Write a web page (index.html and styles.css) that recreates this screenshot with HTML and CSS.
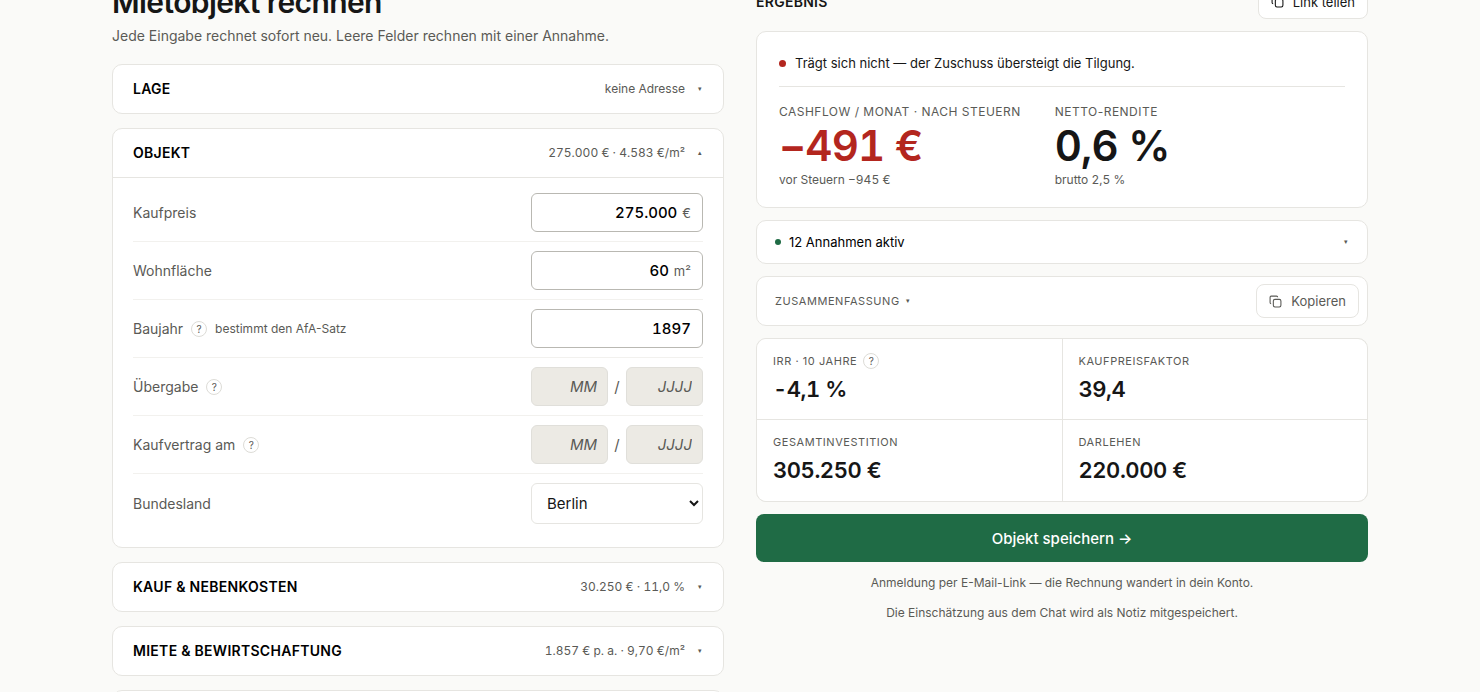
FILE: index.html
```html
<!DOCTYPE html>
<html lang="de">
<head>
  <meta charset="UTF-8">
  <meta name="viewport" content="width=device-width, initial-scale=1">
  <title>Mietobjekt rechnen</title>
  <link rel="stylesheet" href="styles.css">
</head>
<body>
  <main class="page">
    <section class="column inputs">
      <header class="intro">
        <h1>Mietobjekt rechnen</h1>
        <p>Jede Eingabe rechnet sofort neu. Leere Felder rechnen mit einer Annahme.</p>
      </header>

      <div class="card">
        <button type="button" class="card-head" aria-expanded="false">
          <span class="card-title">Lage</span>
          <span class="card-summary">keine Adresse</span>
          <span class="caret">▾</span>
        </button>
      </div>

      <div class="card">
        <button type="button" class="card-head open" aria-expanded="true">
          <span class="card-title">Objekt</span>
          <span class="card-summary">275.000 € · 4.583 €/m²</span>
          <span class="caret">▴</span>
        </button>
        <form class="fields">
          <div class="row">
            <label for="preis">Kaufpreis</label>
            <div class="control">
              <input type="text" id="preis" value="275.000">
              <span class="unit">€</span>
            </div>
          </div>
          <div class="row">
            <label for="flaeche">Wohnfläche</label>
            <div class="control">
              <input type="text" id="flaeche" value="60">
              <span class="unit">m²</span>
            </div>
          </div>
          <div class="row">
            <label for="baujahr">Baujahr</label>
            <button type="button" class="help">?</button>
            <span class="hint">bestimmt den AfA-Satz</span>
            <div class="control">
              <input type="text" id="baujahr" value="1897">
            </div>
          </div>
          <div class="row">
            <label for="uebergabe">Übergabe</label>
            <button type="button" class="help">?</button>
            <div class="date">
              <input type="text" id="uebergabe" placeholder="MM">
              <span>/</span>
              <input type="text" placeholder="JJJJ" aria-label="Übergabe Jahr">
            </div>
          </div>
          <div class="row">
            <label for="vertrag">Kaufvertrag am</label>
            <button type="button" class="help">?</button>
            <div class="date">
              <input type="text" id="vertrag" placeholder="MM">
              <span>/</span>
              <input type="text" placeholder="JJJJ" aria-label="Kaufvertrag Jahr">
            </div>
          </div>
          <div class="row">
            <label for="land">Bundesland</label>
            <select id="land">
              <option>Berlin</option>
            </select>
          </div>
        </form>
      </div>

      <div class="card">
        <button type="button" class="card-head" aria-expanded="false">
          <span class="card-title">Kauf &amp; Nebenkosten</span>
          <span class="card-summary">30.250 € · 11,0 %</span>
          <span class="caret">▾</span>
        </button>
      </div>

      <div class="card">
        <button type="button" class="card-head" aria-expanded="false">
          <span class="card-title">Miete &amp; Bewirtschaftung</span>
          <span class="card-summary">1.857 € p. a. · 9,70 €/m²</span>
          <span class="caret">▾</span>
        </button>
      </div>

      <div class="card">
        <button type="button" class="card-head" aria-expanded="false"></button>
      </div>
    </section>

    <section class="column results">
      <header class="result-head">
        <h2>Ergebnis</h2>
        <button type="button" class="small-button share">
          <svg class="copy-icon" viewBox="0 0 24 24"><rect x="8" y="8" width="14" height="14" rx="3"/><path d="M4 16a2 2 0 0 1-2-2V4a2 2 0 0 1 2-2h10a2 2 0 0 1 2 2"/></svg>
          Link teilen
        </button>
      </header>

      <div class="card verdict">
        <p class="verdict-text"><span class="dot red"></span>Trägt sich nicht — der Zuschuss übersteigt die Tilgung.</p>
        <div class="figures">
          <div class="figure">
            <span class="figure-label">Cashflow / Monat · nach Steuern</span>
            <strong class="negative">−491 €</strong>
            <span class="figure-sub">vor Steuern −945 €</span>
          </div>
          <div class="figure">
            <span class="figure-label">Netto-Rendite</span>
            <strong>0,6 %</strong>
            <span class="figure-sub">brutto 2,5 %</span>
          </div>
        </div>
      </div>

      <div class="card">
        <button type="button" class="assumptions" aria-expanded="false">
          <span class="dot green"></span>
          <span>12 Annahmen aktiv</span>
          <span class="caret">▾</span>
        </button>
      </div>

      <div class="card summary">
        <button type="button" class="summary-toggle" aria-expanded="false">
          <span>Zusammenfassung</span>
          <span class="caret">▾</span>
        </button>
        <button type="button" class="small-button">
          <svg class="copy-icon" viewBox="0 0 24 24"><rect x="8" y="8" width="14" height="14" rx="3"/><path d="M4 16a2 2 0 0 1-2-2V4a2 2 0 0 1 2-2h10a2 2 0 0 1 2 2"/></svg>
          Kopieren
        </button>
      </div>

      <div class="card metrics">
        <div class="metric">
          <div class="metric-label">IRR · 10 Jahre <button type="button" class="help">?</button></div>
          <strong>-4,1 %</strong>
        </div>
        <div class="metric">
          <div class="metric-label">Kaufpreisfaktor</div>
          <strong>39,4</strong>
        </div>
        <div class="metric">
          <div class="metric-label">Gesamtinvestition</div>
          <strong>305.250 €</strong>
        </div>
        <div class="metric">
          <div class="metric-label">Darlehen</div>
          <strong>220.000 €</strong>
        </div>
      </div>

      <button type="button" class="save">Objekt speichern →</button>
      <p class="note">Anmeldung per E-Mail-Link — die Rechnung wandert in dein Konto.</p>
      <p class="note">Die Einschätzung aus dem Chat wird als Notiz mitgespeichert.</p>
    </section>
  </main>
</body>
</html>
```
FILE: styles.css
```css
* {
  box-sizing: border-box;
}
html {
  height: 100%;
}
body {
  height: 100%;
  margin: 0;
  overflow: hidden;
  background-color: #fafaf8;
  color: #161616;
  font-family: Inter, "Liberation Sans", sans-serif;
  font-size: 14px;
}
h1, h2, p {
  margin: 0;
}
button, input, select {
  font: inherit;
  color: inherit;
}
button {
  margin: 0;
  padding: 0;
  border: none;
  background: none;
  cursor: pointer;
}

/* page scrolled a little past its top */
.page {
  display: grid;
  grid-template-columns: 1fr 1fr;
  align-items: start;
  gap: 32px;
  max-width: 1256px;
  margin: -16px auto 0;
}
.column {
  display: flex;
  flex-direction: column;
}
.inputs {
  gap: 14px;
}
.results {
  gap: 12px;
}

/* headings */
.intro {
  height: 66px;
}
.intro h1 {
  font-size: 30px;
  line-height: 36px;
  font-weight: 600;
  letter-spacing: -0.02em;
}
.intro p {
  margin-top: 4px;
  line-height: 24px;
  color: #5a5a56;
}
.result-head {
  display: flex;
  justify-content: space-between;
  align-items: center;
  height: 35px;
}
.result-head h2 {
  font-size: 14px;
  line-height: 20px;
  font-weight: 600;
  letter-spacing: 0.02em;
  text-transform: uppercase;
}

/* cards */
.card {
  border: 1px solid #e6e5e1;
  border-radius: 10px;
  background-color: #fff;
}
.card-head {
  display: flex;
  align-items: center;
  width: 100%;
  height: 48px;
  padding: 0 20px;
  text-align: left;
}
.card-head.open {
  height: 49px;
  border-bottom: 1px solid #e6e5e1;
}
.card-title {
  flex: 1;
  color: #000;
  font-size: 14px;
  line-height: 20px;
  font-weight: 600;
  letter-spacing: 0.02em;
  text-transform: uppercase;
}
.card-summary {
  margin-right: 12px;
  color: #5a5a56;
  font-size: 12px;
  line-height: 18px;
  font-variant-numeric: tabular-nums;
}
.caret {
  width: 6px;
  color: #5a5a56;
  font-size: 7px;
  line-height: 10px;
  text-align: center;
}

/* form rows */
.fields {
  padding: 6px 20px 14px;
}
.row {
  display: flex;
  align-items: center;
  padding: 9px 0;
  border-bottom: 1px solid #f2f1ee;
  color: #5a5a56;
}
.row:last-child {
  border-bottom: none;
}
.row label {
  line-height: 20px;
}
.help {
  width: 16px;
  height: 16px;
  margin-left: 8px;
  border: 1px solid #dddcd7;
  border-radius: 50%;
  color: #5a5a56;
  font-size: 10px;
  line-height: 14px;
}
.hint {
  margin-left: 8px;
  font-size: 12px;
}
.control {
  display: flex;
  align-items: center;
  gap: 5px;
  width: 172px;
  height: 39px;
  margin-left: auto;
  padding: 0 11px;
  border: 1px solid #b9b8b2;
  border-radius: 6px;
}
.control input {
  flex: 1;
  min-width: 0;
  padding: 0;
  border: none;
  outline: none;
  background: none;
  color: #000;
  font-size: 15px;
  font-weight: 500;
  text-align: right;
  font-variant-numeric: tabular-nums;
}
.unit {
  font-size: 13px;
}
.date {
  display: flex;
  justify-content: space-between;
  align-items: center;
  width: 172px;
  margin-left: auto;
  font-size: 15px;
}
.date input {
  width: 77px;
  height: 39px;
  padding: 0 10px;
  border: 1px solid #e0dfda;
  border-radius: 6px;
  background-color: #eceae4;
  text-align: right;
}
.date input::placeholder {
  color: #5a5a56;
  font-style: italic;
}
.row select {
  width: 172px;
  height: 41px;
  margin-left: auto;
  padding: 0 0 0 11px;
  border: 1px solid #e6e5e1;
  border-radius: 6px;
  background-color: #fff;
  color: #161616;
  font-size: 15px;
}

/* result */
.small-button {
  display: flex;
  align-items: center;
  gap: 9px;
  height: 34px;
  padding: 0 12px;
  border: 1px solid #e6e5e1;
  border-radius: 8px;
  background-color: #fff;
  color: #5a5a56;
  font-size: 13px;
}
.share {
  color: #161616;
}
.copy-icon {
  width: 13px;
  height: 13px;
  fill: none;
  stroke: currentColor;
  stroke-width: 2;
}
.dot {
  width: 6px;
  height: 6px;
  border-radius: 50%;
}
.red {
  width: 7px;
  height: 7px;
  background-color: #b3261e;
}
.green {
  background-color: #1f6b45;
}
.verdict {
  padding: 20px 22px 18px;
}
.verdict-text {
  display: flex;
  align-items: center;
  gap: 9px;
  height: 35px;
  padding-bottom: 12px;
  border-bottom: 1px solid #e6e5e1;
  font-size: 13px;
}
.figures {
  display: flex;
  gap: 34px;
  padding-top: 16px;
}
.figure {
  display: flex;
  flex-direction: column;
}
.figure-label {
  color: #5a5a56;
  font-size: 12px;
  line-height: 18px;
  letter-spacing: 0.04em;
  text-transform: uppercase;
}
.figure strong {
  font-size: 42px;
  line-height: 50px;
  font-weight: 600;
  letter-spacing: -0.02em;
  font-variant-numeric: tabular-nums;
}
.figure .negative {
  color: #b3261e;
}
.figure-sub {
  color: #5a5a56;
  font-size: 12px;
  line-height: 18px;
  font-variant-numeric: tabular-nums;
}
.assumptions {
  display: flex;
  align-items: center;
  gap: 8px;
  width: 100%;
  height: 42px;
  padding: 0 18px;
  color: #000;
  font-size: 13px;
}
.assumptions .caret {
  margin-left: auto;
}
.summary {
  display: flex;
  justify-content: space-between;
  align-items: center;
  height: 50px;
  padding: 0 8px 0 18px;
}
.summary-toggle {
  display: flex;
  align-items: center;
  gap: 6px;
  color: #5a5a56;
  font-size: 11px;
  letter-spacing: 0.05em;
  text-transform: uppercase;
}
.metrics {
  display: grid;
  grid-template-columns: 1fr 1fr;
  grid-template-rows: 80px 81px;
  gap: 1px;
  overflow: hidden;
  background-color: #e6e5e1;
}
.metric {
  padding: 14px 16px;
  background-color: #fff;
}
.metric-label {
  display: flex;
  align-items: center;
  height: 16px;
  color: #5a5a56;
  font-size: 11px;
  letter-spacing: 0.05em;
  text-transform: uppercase;
}
.metric-label .help {
  margin-left: 6px;
}
.metric strong {
  display: block;
  margin-top: 4px;
  font-size: 22px;
  line-height: 32px;
  font-weight: 600;
  letter-spacing: -0.02em;
  font-variant-numeric: tabular-nums;
}
.save {
  height: 48px;
  border-radius: 8px;
  background-color: #1f6b45;
  color: #fff;
  font-size: 15px;
  font-weight: 500;
}
.note {
  color: #5a5a56;
  font-size: 12px;
  line-height: 18px;
  text-align: center;
}
```
